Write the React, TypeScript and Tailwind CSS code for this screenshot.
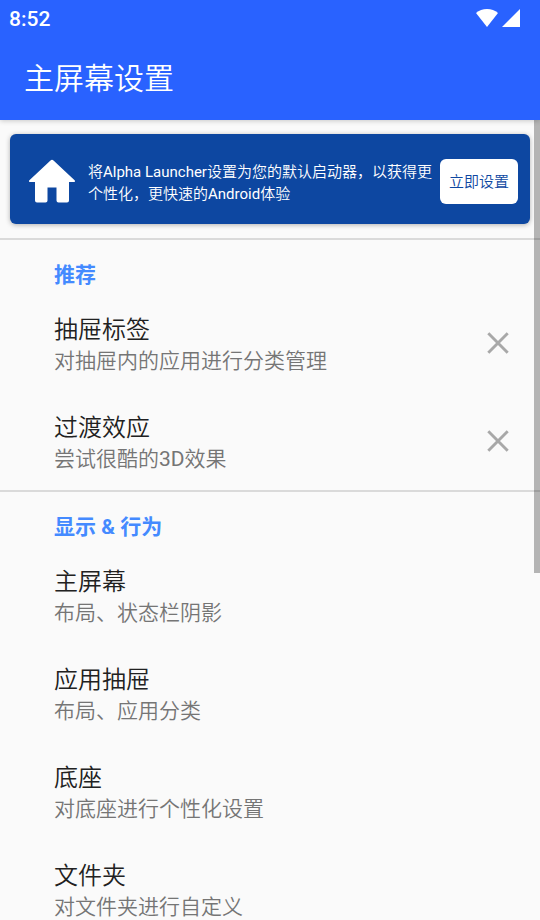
type Item = { title: string; summary: string; dismissible?: boolean };
type Section = { heading: string; items: Item[] };

const sections: Section[] = [
  {
    heading: "推荐",
    items: [
      { title: "抽屉标签", summary: "对抽屉内的应用进行分类管理", dismissible: true },
      { title: "过渡效应", summary: "尝试很酷的3D效果", dismissible: true },
    ],
  },
  {
    heading: "显示 & 行为",
    items: [
      { title: "主屏幕", summary: "布局、状态栏阴影" },
      { title: "应用抽屉", summary: "布局、应用分类" },
      { title: "底座", summary: "对底座进行个性化设置" },
      { title: "文件夹", summary: "对文件夹进行自定义" },
    ],
  },
];

function StatusBar() {
  return (
    <div className="flex h-9 items-center justify-between pr-5 pl-[9px]">
      <span className="pt-0.5 text-[21px] leading-6 font-medium">8:52</span>
      <div className="flex items-center gap-1">
        <svg className="h-[19px] w-[22px]" viewBox="0 0 22 19" fill="currentColor" aria-hidden="true">
          <path d="M11 18 0 4C3 1.300 6.800 0 11 0s8 1.300 11 4z" />
        </svg>
        <svg className="h-[18px] w-[18px]" viewBox="0 0 18 18" fill="currentColor" aria-hidden="true">
          <path d="M18 0v18H0z" />
        </svg>
      </div>
    </div>
  );
}

function Banner() {
  return (
    <section className="mx-[10px] mt-[14px] mb-[14px] flex h-[90px] items-center rounded-md bg-[#0d47a1] pt-1 pr-3 pl-[18px] text-white shadow-[0_1px_5px_rgba(0,0,0,0.3)]">
      <svg className="mr-3 h-12 w-12 shrink-0" viewBox="0 0 48 48" fill="currentColor" aria-hidden="true">
        <path d="M22.500 3.600a2 2 0 0 1 3 0L46.600 23.200c.8.8.4 1.800-.8 1.800H41v18.500a2 2 0 0 1-2 2h-8.500a2 2 0 0 1-2-2V30.500h-9v13a2 2 0 0 1-2 2H9a2 2 0 0 1-2-2V25H2.200c-1.200 0-1.600-1-.8-1.800z" />
      </svg>
      <p className="min-w-0 flex-1 pt-1 text-[15px] leading-[22px]">
        将Alpha Launcher设置为您的默认启动器，以获得更个性化，更快速的Android体验
      </p>
      <button
        type="button"
        className="ml-2 h-[45px] w-[78px] shrink-0 rounded-md bg-white pt-px text-[15px] leading-[22px] text-[#0d47a1]"
      >
        立即设置
      </button>
    </section>
  );
}

function Row({ item }: { item: Item }) {
  return (
    <li className="flex h-[98px] items-center justify-between pr-[30px] pl-[54px]">
      <button type="button" className="min-w-0 flex-1 pt-0.5 text-left">
        <span className="block pt-0.5 text-2xl leading-8 text-[#212121]">{item.title}</span>
        <span className="block text-[21px] leading-[30px] text-[#757575]">{item.summary}</span>
      </button>
      {item.dismissible && (
        <button type="button" aria-label={`关闭${item.title}`} className="text-[#a8a8a8]">
          <svg className="h-6 w-6" viewBox="0 0 24 24" fill="none" stroke="currentColor" strokeWidth="2.9" aria-hidden="true">
            <path d="M2.300 2.300 21.700 21.700M21.700 2.300 2.300 21.700" />
          </svg>
        </button>
      )}
    </li>
  );
}

export default function App() {
  return (
    <div className="flex h-screen flex-col bg-[#fafafa] font-['Roboto','Noto_Sans_CJK_SC_DemiLight','Noto_Sans_CJK_SC',sans-serif]">
      <header className="z-10 shrink-0 bg-[#2962ff] text-white shadow-[0_1px_5px_rgba(0,0,0,0.2)]">
        <StatusBar />
        <h1 className="px-6 pt-[23px] pb-[21px] text-3xl leading-10">主屏幕设置</h1>
      </header>
      <div className="relative min-h-0 flex-1">
        <main className="h-full overflow-y-auto [scrollbar-width:none]">
          <Banner />
          {sections.map((section) => (
            <section key={section.heading} className="border-t-2 border-[#dadada]">
              <h2 className="px-[54px] pt-5 pb-1 font-['Roboto','Noto_Sans_CJK_SC',sans-serif] text-[21px] leading-[30px] font-bold text-[#448aff]">
                {section.heading}
              </h2>
              <ul>
                {section.items.map((item) => (
                  <Row key={item.title} item={item} />
                ))}
              </ul>
            </section>
          ))}
        </main>
        <div className="pointer-events-none absolute top-0 right-0 h-[453px] w-1.5 bg-black/28" />
      </div>
    </div>
  );
}
